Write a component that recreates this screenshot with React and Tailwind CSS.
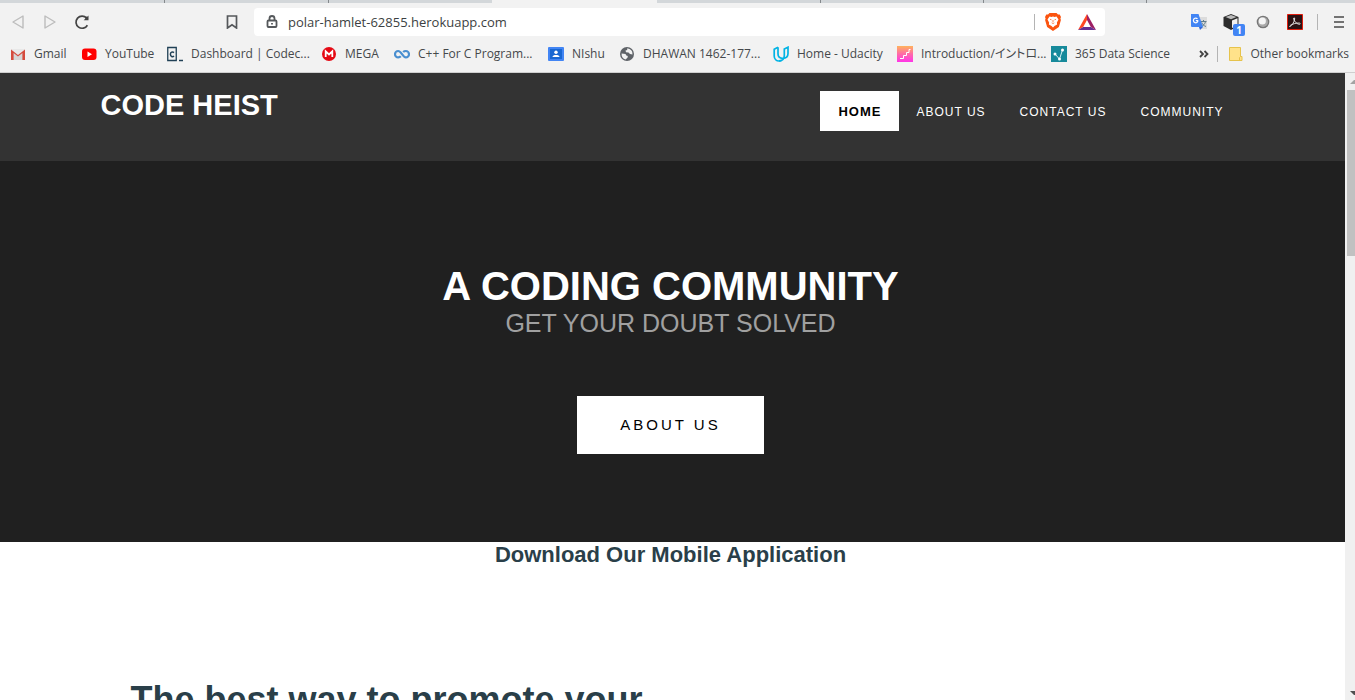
import React from 'react';
import clsx from 'clsx';

const tabs = [
  { id: 1, className: 'w-[165px] border-r' },
  { id: 2, className: 'w-[164px] border-r' },
  { id: 3, className: 'w-[163px]' },
  { id: 4, className: 'w-[165px]', active: true },
  { id: 5, className: 'w-[164px] border-r' },
  { id: 6, className: 'w-[163px] border-r' },
  { id: 7, className: 'w-[163px] border-r' },
];

function GmailIcon() {
  return (
    <svg viewBox="0 0 16 16" className="size-4 shrink-0">
      <path d="M1 3h14v11H1z" fill="#e8e8e8" />
      <path d="M3 14V6l5 4 5-4v8z" fill="#d6d6d6" />
      <path d="M1 14V3.400L8 9l7-5.600V14h-2.600V7L8 10.600 3.600 7v7z" fill="#d54b3d" />
    </svg>
  );
}

function YouTubeIcon() {
  return (
    <svg viewBox="0 0 16 16" className="size-4 shrink-0">
      <rect x="1" y="2.500" width="14.500" height="11.500" rx="3" fill="#f00" />
      <path d="M6.500 5.500v5.500L11 8.300z" fill="#fff" />
    </svg>
  );
}

function CodecademyIcon() {
  return (
    <svg viewBox="0 0 16 16" className="size-4 shrink-0" fill="none" stroke="#204056">
      <path d="M.75 1.500h8.500v13H.75z" strokeWidth="1.300" />
      <path d="M7 6.600C5.600 5.300 3.400 6 3.400 8.300s2.200 3 3.600 1.700" strokeWidth="1.500" />
      <path d="M12 14.500h4" strokeWidth="1.500" />
    </svg>
  );
}

function MegaIcon() {
  return (
    <svg viewBox="0 0 16 16" className="size-4 shrink-0">
      <circle cx="8" cy="8" r="7" fill="#e50914" />
      <path d="M4.700 11V5.300L8 8.500l3.300-3.200V11" fill="none" stroke="#fff" strokeWidth="1.800" />
    </svg>
  );
}

function InfinityIcon() {
  return (
    <svg viewBox="0 0 16 16" className="size-4 shrink-0" fill="none" stroke="#4a8fd0" strokeWidth="2.200">
      <path d="M6.800 10.300C6 11.200 5 11.400 4.200 11.400a3.200 3.200 0 0 1 0-6.400C7.500 5 8.500 11.400 11.800 11.400a3.200 3.200 0 0 0 0-6.400c-1 0-1.900.3-2.600 1.100" />
    </svg>
  );
}

function ClassroomIcon() {
  return (
    <svg viewBox="0 0 16 16" className="size-4 shrink-0">
      <rect y="1" width="16" height="14" rx="1" fill="#4285f4" />
      <rect x="2" y="3" width="12" height="10" fill="#1967d2" />
      <circle cx="8" cy="6.300" r="1.700" fill="#fff" />
      <path d="M4.500 11c0-2.600 7-2.600 7 0z" fill="#fff" />
    </svg>
  );
}

function GlobeIcon() {
  return (
    <svg viewBox="0 0 16 16" className="size-4 shrink-0">
      <circle cx="8" cy="8" r="7" fill="#5f6368" />
      <path
        d="M2.600 7.500 6.500 8l.8 1.500 1.500.5-.3 1.800-2 1.800C4 13 2.300 10.500 2.600 7.500zM8 2.500c2-.3 4.500 1.300 5.200 3.300l.3 2.700-2.500-.5-1.500-1.500-2.500-.3-.5-1.700 1.800-.5z"
        fill="#f2f2f2"
      />
    </svg>
  );
}

function UdacityIcon() {
  return (
    <svg viewBox="0 0 16 16" className="size-4 shrink-0" fill="none" stroke="#02b3e4" strokeWidth="1.700">
      <path d="M5 1.200 1.200 3.300V10c0 3 2.300 5 4.800 5 1 0 2.300-.5 2.300-.5" />
      <path d="M5 1.200V8c0 2.600 1.700 4.300 4.700 4.300 3.200 0 5.300-1.800 5.300-4.800V1.200L11.300 3v6.500c0 2.800-1.800 5.200-5.300 5.400" />
    </svg>
  );
}

function StepsIcon() {
  return (
    <svg viewBox="0 0 16 16" className="size-4 shrink-0">
      <defs>
        <linearGradient id="steps" x1="0" y1="0" x2="0" y2="1">
          <stop offset="0" stopColor="#ffb35c" />
          <stop offset=".5" stopColor="#ff6aa8" />
          <stop offset="1" stopColor="#ff35e8" />
        </linearGradient>
      </defs>
      <path d="M0 0h16v16H0z" fill="url(#steps)" />
      <path d="M3 12.500h3.500v-3h3v-3h2.500v-3h1.500" fill="none" stroke="#fff" />
    </svg>
  );
}

function DataScienceIcon() {
  return (
    <svg viewBox="0 0 16 16" className="size-4 shrink-0">
      <path d="M0 0h16v16H0z" fill="#178a9b" />
      <path d="m4 8 4.500 5 3-9" fill="none" stroke="#d5f2f5" />
      <g fill="#fff">
        <circle cx="4" cy="8" r="1.500" />
        <circle cx="8.500" cy="13" r="1.500" />
        <circle cx="11.500" cy="4" r="1.500" />
      </g>
    </svg>
  );
}

const bookmarks = [
  { label: 'Gmail', icon: GmailIcon, className: 'w-[71px]' },
  { label: 'YouTube', icon: YouTubeIcon, className: 'w-[86px]' },
  { label: 'Dashboard | Codec...', icon: CodecademyIcon, className: 'w-[154px]' },
  { label: 'MEGA', icon: MegaIcon, className: 'w-[73px]' },
  { label: 'C++ For C Program...', icon: InfinityIcon, className: 'w-[154px]' },
  { label: 'NIshu', icon: ClassroomIcon, className: 'w-[71px]' },
  { label: 'DHAWAN 1462-177...', icon: GlobeIcon, className: 'w-[154px]' },
  { label: 'Home - Udacity', icon: UdacityIcon, className: 'w-[124px]' },
  { label: 'Introduction/イントロ...', icon: StepsIcon, className: 'w-[154px]' },
  { label: '365 Data Science', icon: DataScienceIcon, className: 'w-[124px]' },
];

const navLinks = [
  { label: 'Home', active: true },
  { label: 'About Us' },
  { label: 'Contact Us' },
  { label: 'Community' },
];

function IconButton({ label, className = 'w-8', children }) {
  return (
    <button type="button" aria-label={label} className={clsx('flex h-7 shrink-0 items-center justify-center', className)}>
      {children}
    </button>
  );
}

function TabStrip() {
  return (
    <div className="flex h-[3px] bg-[#d3d7da]">
      {tabs.map((tab) => (
        <div key={tab.id} className={clsx('shrink-0 border-[#85898c]', tab.className, tab.active && 'bg-[#f2f2f2]')} />
      ))}
    </div>
  );
}

function AddressBar() {
  return (
    <div className="flex h-7 min-w-0 flex-1 items-center rounded bg-white pr-px">
      <svg viewBox="0 0 12 14" className="ml-3 h-3.5 w-3 shrink-0" fill="none" stroke="#55585b" strokeWidth="1.800">
        <rect x="1.500" y="5.500" width="9" height="6.500" rx="1" />
        <path d="M3.500 5.500v-2a2.500 2.500 0 0 1 5 0v2" />
        <path d="M6 8v1.600" />
      </svg>
      <input
        type="text"
        aria-label="Address"
        defaultValue="polar-hamlet-62855.herokuapp.com"
        className="ml-2.5 min-w-0 flex-1 bg-transparent pt-0.5 text-[13px] text-[#3c3f42] outline-none"
      />
      <div className="mr-px h-4 w-px bg-[#b4b4b4]" />
      <IconButton label="Brave Shields" className="w-[34px]">
        <svg viewBox="0 0 16 18" className="h-[18px] w-4">
          <path d="M4.500 0h7l1.500 1.600 1.700-.2L16 4l-.6 1.600.5 1.400-2 7L8 18l-5.900-4-2-7 .5-1.400L0 4l1.300-2.600 1.700.2z" fill="#fb5410" />
          <path d="m4.500 3.500 2 .4L8 3.500l1.500.4 2-.4 2 3-1.600 3 .2 2L9.500 13 8 14.500 6.500 13l-2.600-1.500.2-2-1.600-3z" fill="#fff" />
          <path d="m5 6.300 1.500.5M11 6.300l-1.500.5M8 7v2M6.700 9.800 8 10.500l1.300-.7" fill="none" stroke="#fb5410" strokeWidth=".7" />
        </svg>
      </IconButton>
      <IconButton label="Rewards" className="w-[34px]">
        <svg viewBox="0 0 18 16" className="h-4 w-[18px]">
          <path d="M9 0 0 16l5.200-3L9 6z" fill="#ff4724" />
          <path d="M9 0v6l3.800 7 5.200 3z" fill="#9e1f63" />
          <path d="M0 16h18l-5.200-3H5.200z" fill="#662d91" />
        </svg>
      </IconButton>
    </div>
  );
}

function Toolbar() {
  return (
    <div className="flex h-7 items-center">
      <div className="flex w-[254px] shrink-0 items-center pl-0.5 pr-1.5">
        <IconButton label="Back">
          <svg viewBox="0 0 12 14" className="h-3.5 w-3" fill="none" stroke="#bdbdbd" strokeWidth="1.400" strokeLinejoin="round">
            <path d="M11 1v12L1 7z" />
          </svg>
        </IconButton>
        <IconButton label="Forward">
          <svg viewBox="0 0 12 14" className="h-3.5 w-3" fill="none" stroke="#bdbdbd" strokeWidth="1.400" strokeLinejoin="round">
            <path d="M1 1v12l10-6z" />
          </svg>
        </IconButton>
        <IconButton label="Reload">
          <svg viewBox="0 0 16 16" className="size-4" fill="none" stroke="#444" strokeWidth="1.700">
            <path d="M13.400 11.200A6.100 6.100 0 1 1 12.600 4" />
            <circle cx="12.700" cy="4" r="1.500" fill="#444" stroke="none" />
            <path d="M14.500 1.500v4.800H9.700z" fill="#444" stroke="none" />
          </svg>
        </IconButton>
        <IconButton label="Bookmark this page" className="ml-auto w-8">
          <svg viewBox="0 0 12 14" className="h-3.5 w-3" fill="none" stroke="#55585b" strokeWidth="1.700">
            <path d="M1.500 1h9v12L6 9.800 1.500 13z" />
          </svg>
        </IconButton>
      </div>

      <AddressBar />

      <div className="flex w-[250px] shrink-0 items-center justify-end pr-px">
        <IconButton label="Translate">
          <svg viewBox="0 0 16 16" className="size-4">
            <path d="M6 3h10v12H9z" fill="#dcdcdc" />
            <path d="M9.500 7.500h6M12.500 6v1.500M14.500 7.500c-.5 2.500-2 4-4 5M10.800 8.500c.8 2 2 3.200 4.200 4" fill="none" stroke="#607d8b" />
            <path d="M0 0h7.500L12 13H1a1 1 0 0 1-1-1z" fill="#4285f4" />
            <path d="M8 13h4l-3 3z" fill="#3367d6" />
            <path d="M6.500 4.800C4.800 3.300 2.400 4.300 2.400 6.500s2.900 3.200 4.300 1.200V6.600H4.800" fill="none" stroke="#fff" strokeWidth="1.200" />
          </svg>
        </IconButton>
        <IconButton label="Extension, 1 notification" className="relative w-8">
          <svg viewBox="0 0 16 16" className="size-4">
            <path d="m8 0 7.500 3v9L8 16 .5 12V3z" fill="#2c2c2c" />
            <path d="M9 6.500 14.500 4.200v7.300L9 14z" fill="#f2f2f2" />
            <path d="m8 1 5.500 2L8 5.200 2.500 3z" fill="#bbb" />
          </svg>
          <span className="absolute bottom-0 right-0.5 flex h-3 w-3 items-center justify-center rounded-xs bg-[#4285f4] text-[10px] font-bold leading-3 text-white">
            1
          </span>
        </IconButton>
        <IconButton label="Recorder">
          <svg viewBox="0 0 14 14" className="size-3.5">
            <circle cx="7" cy="7" r="6.300" fill="#777" />
            <circle cx="7" cy="7" r="5" fill="#aaa" />
            <circle cx="6.300" cy="6" r="3.600" fill="#f5f5f5" />
          </svg>
        </IconButton>
        <IconButton label="Acrobat">
          <svg viewBox="0 0 16 16" className="size-4">
            <path d="M.5.5h15v15H.5z" fill="#2b1214" stroke="#e01b0c" />
            <path
              d="M3 12.500c2-1 4-4 4.700-7.500.2-1.700-1.400-1.700-1 0 .6 2.400 3 5 5.500 5.300 1.600 0 1.300-1.400-.5-1.300-3 0-6 1-8.200 2.300-1 .8-1.200 1.400-.5 1.200z"
              fill="none"
              stroke="#eee"
              strokeWidth=".9"
            />
          </svg>
        </IconButton>
        <div className="mx-1.5 h-4 w-px bg-[#b4b4b4]" />
        <IconButton label="Menu" className="w-[30px]">
          <svg viewBox="0 0 10 12" className="h-3 w-2.5" stroke="#4a4a4a" strokeWidth="1.600">
            <path d="M0 1h10M0 6h10M0 11h10" />
          </svg>
        </IconButton>
      </div>
    </div>
  );
}

function BookmarksBar() {
  return (
    <nav
      aria-label="Bookmarks"
      className="flex h-9 items-center whitespace-nowrap pl-2.5 pr-1.5 text-xs text-[#45484b] [font-feature-settings:'palt']"
    >
      {bookmarks.map(({ label, icon: Icon, className }) => (
        <a key={label} href="#" className={clsx('flex shrink-0 items-center gap-2', className)}>
          <Icon />
          <span>{label}</span>
        </a>
      ))}
      <div className="ml-auto flex shrink-0 items-center">
        <button type="button" aria-label="More bookmarks" className="mr-2">
          <svg viewBox="0 0 10 8" className="h-2 w-2.5" fill="none" stroke="#444" strokeWidth="1.800">
            <path d="m1 1 3 3-3 3M5.500 1l3 3-3 3" />
          </svg>
        </button>
        <div className="mr-2.5 h-4 w-px bg-[#b4b4b4]" />
        <a href="#" className="flex items-center gap-1.5">
          <svg viewBox="0 0 16 16" className="size-4">
            <path d="M1.500 1.500h11v9h1.500v4H1.500z" fill="#ffe28a" stroke="#e6c34c" />
            <path d="M11.500 14.500v-3l1-1" fill="none" stroke="#e6c34c" />
          </svg>
          <span>Other bookmarks</span>
        </a>
      </div>
    </nav>
  );
}

function SiteHeader() {
  return (
    <header className="bg-[#333] pr-1">
      <div className="mx-auto flex h-[88px] max-w-[1140px] items-start justify-between text-white">
        <a href="#" className="pt-3.5 text-[29px] font-bold uppercase leading-9">
          Code Heist
        </a>
        <nav aria-label="Main" className="flex pt-[18px]">
          {navLinks.map((link) => (
            <a
              key={link.label}
              href="#"
              className={clsx(
                'h-10 uppercase leading-[42px] tracking-[1px]',
                link.active ? 'bg-white px-[18px] text-[13px] font-bold text-black' : 'px-[17px] text-xs font-medium'
              )}
            >
              {link.label}
            </a>
          ))}
        </nav>
      </div>
    </header>
  );
}

function Hero() {
  return (
    <section className="flex flex-col items-center bg-[#202020] pb-[88px] pr-1 pt-[103px] text-center uppercase">
      <h1 className="text-[40px] font-bold leading-[44px] text-white">A Coding Community</h1>
      <h2 className="text-[25px] leading-[30px] text-[#a0a0a0]">Get Your Doubt Solved</h2>
      <a href="#" className="mt-[58px] bg-white px-[43px] text-[15px] leading-[58px] tracking-[3px] text-black">
        About Us
      </a>
    </section>
  );
}

function Promo() {
  return (
    <section className="pr-1 font-bold text-[#2a3f49]">
      <h2 className="text-center text-[22px] leading-[26px]">Download Our Mobile Application</h2>
      <div className="mx-auto max-w-[1140px] px-[30px] pt-28">
        <h3 className="w-1/2 whitespace-nowrap text-4xl">The best way to promote your</h3>
      </div>
    </section>
  );
}

function Scrollbar() {
  return (
    <div className="flex w-2.5 shrink-0 flex-col items-end justify-between overflow-hidden bg-[#f0f0f0]">
      <div className="flex h-1/2 flex-col items-end">
        <svg viewBox="0 0 5 17" className="h-[17px] w-[5px] shrink-0">
          <path d="M0 11h5V7H4z" fill="#a3a3a3" />
        </svg>
        <div className="h-[166px] w-2 bg-[#c1c1c1]" />
      </div>
      <svg viewBox="0 0 5 17" className="h-[17px] w-[5px] shrink-0">
        <path d="M0 8h5v4H4z" fill="#505050" />
      </svg>
    </div>
  );
}

export default function App() {
  return (
    <div className="flex h-screen flex-col overflow-hidden bg-white">
      <div className="shrink-0 border-b border-[#cfcfcf] bg-[#f2f2f2] font-['Open_Sans','Noto_Sans_CJK_JP',sans-serif]">
        <TabStrip />
        <div className="pt-[5px]">
          <Toolbar />
        </div>
        <BookmarksBar />
      </div>
      <div className="flex min-h-0 flex-1">
        <main className="min-w-0 flex-1 overflow-hidden font-['Liberation_Sans',Arial,sans-serif]">
          <SiteHeader />
          <Hero />
          <Promo />
        </main>
        <Scrollbar />
      </div>
    </div>
  );
}
